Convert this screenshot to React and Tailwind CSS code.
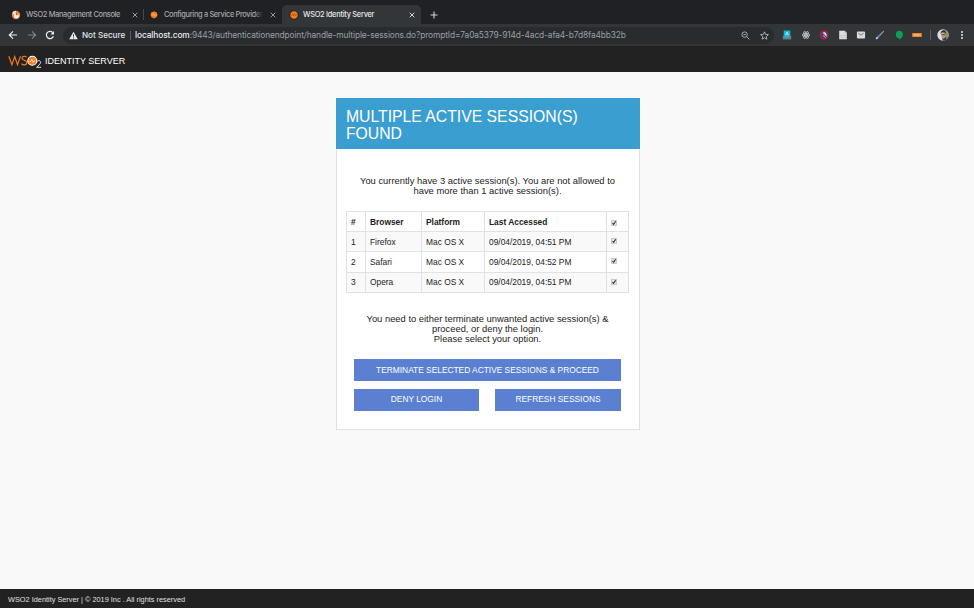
import React from "react";

const arial = "font-['Liberation_Sans',Arial,sans-serif]";

function Close({ className = "" }) {
  return (
    <svg viewBox="0 0 6 6" className={`h-[6px] w-[6px] shrink-0 ${className}`} stroke="currentColor" strokeWidth=".9">
      <path d="M.7.7l4.6 4.6M5.3.7L.7 5.3" />
    </svg>
  );
}

function Favicon({ kind }) {
  if (kind === "console")
    return (
      <svg viewBox="0 0 10 10" className="h-[10px] w-[10px] shrink-0">
        <circle cx="5" cy="5" r="4.2" fill="#f28a3c" />
        <path d="M5 .8A4.2 4.2 0 0 0 1 3.2L3.6 4.6 5 5z" fill="#f7e3d3" />
        <path d="M3.2 7.6V4.9L5 3.9l1 1.7 1.4-1.3.6 2.7-2 1.2z" fill="#fff" />
        <path d="M5 2.2l.8 3.3" stroke="#8a4a26" strokeWidth=".7" />
      </svg>
    );
  if (kind === "docs")
    return (
      <svg viewBox="0 0 10 10" className="h-[10px] w-[10px] shrink-0">
        <path d="M5 1.3L7.900 2.600 8.500 5 7.500 7.200 5 8.400 2.500 7.200 1.500 5 2.100 2.600z" fill="#f47b20" />
        <path d="M2.6 5h1.2l.8-1.5.9 2.4.7-.9h1.2" fill="none" stroke="#ffd0a6" strokeWidth=".6" />
      </svg>
    );
  return (
    <svg viewBox="0 0 10 10" className="h-[10px] w-[10px] shrink-0">
      <circle cx="5" cy="5" r="4.2" fill="#f47b20" stroke="#141414" strokeWidth=".8" />
      <path d="M2.300 5.800l1.200-2 1 2.200 1-2.400 1 2.200 1.200-1.500" fill="none" stroke="#a3521a" strokeWidth=".7" />
    </svg>
  );
}

function TabStrip() {
  return (
    <div className="flex h-[24px] items-end bg-[#202124] font-[Inter,sans-serif] text-[7.4px] font-medium tracking-[-0.33px] text-[#a5a8ac]">
      <div className="flex h-[19px] w-[143px] items-center pl-[11px] pr-[5px]">
        <Favicon kind="console" />
        <span className="ml-[5px] flex-1 whitespace-nowrap">WSO2 Management Console</span>
        <Close />
      </div>
      <div className="mb-[4px] h-[11px] w-px bg-[#46484b]" />
      <div className="flex h-[19px] w-[138px] items-center pl-[5px] pr-[6px]">
        <Favicon kind="docs" />
        <span className="relative ml-[5px] whitespace-nowrap">
          Configuring a Service Provider
          <span className="absolute inset-y-0 right-0 w-[9px] bg-gradient-to-r from-transparent to-[#202124]" />
        </span>
        <Close className="ml-auto" />
      </div>
      <div className="flex h-[19px] w-[139px] items-center rounded-t-[5px] bg-[#323639] pl-[7px] pr-[6px] tracking-[-0.26px] text-[#e6e7e8]">
        <Favicon kind="identity" />
        <span className="ml-[4px] flex-1 whitespace-nowrap">WSO2 Identity Server</span>
        <Close />
      </div>
      <svg viewBox="0 0 8 8" className="mb-[5px] ml-[9px] h-[8px] w-[8px]" stroke="#d0d2d4" strokeWidth="1.1">
        <path d="M4 .5v7M.5 4h7" />
      </svg>
    </div>
  );
}

function Extensions() {
  return (
    <div className="ml-[8px] flex items-center gap-[8.6px]">
      <svg viewBox="0 0 10 10" className="h-[10px] w-[10px]">
        <path d="M.8 5.8h8.4v3.6H.8z" fill="#77797b" />
        <path d="M1.7.6h6.6v6.2L5 8.2 1.7 6.8z" fill="#18b6d0" />
        <path d="M3.6 5.2L5 2l1.4 3.2M4.1 4.2h1.8" fill="none" stroke="#c9f3fa" strokeWidth=".7" />
      </svg>
      <svg viewBox="0 0 10 10" className="h-[10px] w-[10px]" fill="none" stroke="#bfc2c4" strokeWidth=".8">
        <ellipse cx="5" cy="5" rx="3.900" ry="1.6" />
        <ellipse cx="5" cy="5" rx="3.900" ry="1.6" transform="rotate(60 5 5)" />
        <ellipse cx="5" cy="5" rx="3.900" ry="1.6" transform="rotate(120 5 5)" />
        <circle cx="5" cy="5" r=".8" fill="#d8dadb" />
      </svg>
      <svg viewBox="0 0 10 10" className="h-[10px] w-[10px]">
        <circle cx="5" cy="5" r="3.6" fill="#2c4a78" />
        <path d="M3.600 2l2.600-.3 2 3.500-1 2.800-2.600-1z" fill="#6fb0f0" />
        <path d="M5 2.600l1.800 1.400-.5 1.300" stroke="#eef6fd" strokeWidth=".9" fill="none" />
        <circle cx="5" cy="5" r="3.9" fill="none" stroke="#cf1728" strokeWidth="1.2" />
        <path d="M2.2 2.3l5.6 5.4" stroke="#cf1728" strokeWidth="1" />
      </svg>
      <svg viewBox="0 0 10 10" className="h-[10px] w-[10px]">
        <path d="M1.2.8h5.6l2 2v6.5H1.2z" fill="#dedede" />
        <path d="M6.8.8v2h2M2.2 5.4h5.6M2.2 7.3h5.6" fill="none" stroke="#a9abad" strokeWidth=".5" />
      </svg>
      <svg viewBox="0 0 10 10" className="h-[10px] w-[10px]">
        <rect x=".9" y="1.5" width="8.2" height="7" rx="1" fill="#d9dadb" />
        <path d="M2.400 3.200L5 5.200l2.600-2" fill="none" stroke="#696c6f" strokeWidth=".9" />
      </svg>
      <svg viewBox="0 0 10 10" className="h-[10px] w-[10px]">
        <path d="M4.8 5.2L8.8 1.2" stroke="#a3a6aa" strokeWidth="1.1" />
        <path d="M1.8 8.300l3.3-3.4" stroke="#5a79d0" strokeWidth="2" />
        <path d="M1.1 9l1.6-1.6" stroke="#c6cce0" strokeWidth="1.6" />
      </svg>
      <svg viewBox="0 0 10 10" className="h-[10px] w-[10px]" fill="#0f9d58">
        <path d="M5 .7a3.9 3.9 0 0 1 3.9 3.9C8.9 7 7 8.800 5.300 9.700V8.400A3.900 3.900 0 0 1 5 .7z" />
      </svg>
      <svg viewBox="0 0 10 10" className="h-[10px] w-[10px]">
        <rect x=".2" y="3.100" width="9.600" height="3.800" rx=".5" fill="#ee8428" />
        <path d="M1.500 5h7" stroke="#ffe0bf" strokeWidth="1.100" strokeDasharray="1.300 .3" />
      </svg>
    </div>
  );
}

function Toolbar() {
  return (
    <div className="flex h-[22px] items-center bg-[#323639] font-[Inter,sans-serif] text-[8.15px]">
      <svg viewBox="0 0 10 10" className="ml-[8px] h-[10px] w-[10px]" fill="none" stroke="#eceded" strokeWidth="1.200">
        <path d="M9 5H1.400M5 1.300L1.300 5 5 8.700" />
      </svg>
      <svg viewBox="0 0 10 10" className="ml-[9px] h-[10px] w-[10px]" fill="none" stroke="#828588" strokeWidth="1.100">
        <path d="M1 5h7.600M5 1.300L8.700 5 5 8.700" />
      </svg>
      <svg viewBox="0 0 10 10" className="ml-[8px] h-[10px] w-[10px]" fill="none" stroke="#eceded" strokeWidth="1.200">
        <path d="M8.400 6.200A3.600 3.600 0 1 1 7.700 2.600" />
        <path d="M9 .9v3.500H5.500z" fill="#eceded" stroke="none" />
      </svg>
      <div className="ml-[8px] flex h-[17px] w-[711px] items-center rounded-full bg-[#282c2f] pl-[6px] pr-[5px]">
        <svg viewBox="0 0 10 10" className="h-[9px] w-[9px] shrink-0">
          <path d="M5 .8L9.800 9.300H.2z" fill="#e8eaed" />
          <path d="M5 3.600v2.700M5 7.200v1.100" stroke="#282c2f" strokeWidth="1" />
        </svg>
        <span className="ml-[4px] w-[44px] whitespace-nowrap text-[8.1px] font-medium text-[#e3e5e8]">Not Secure</span>
        <span className="ml-[4px] h-[9px] w-px bg-[#5b5e61]" />
        <span className="ml-[4px] flex-1 whitespace-nowrap text-[8.4px] tracking-[-0.126px] text-[#9b9fa3]">
          <span className="font-medium text-[#e8eaed]">localhost.com</span>
          :9443/authenticationendpoint/handle-multiple-sessions.do?promptId=7a0a5379-914d-4acd-afa4-b7d8fa4bb32b
        </span>
        <svg viewBox="0 0 10 10" className="h-[9px] w-[9px] shrink-0" fill="none" stroke="#b4b7ba" strokeWidth="1">
          <circle cx="4" cy="4" r="3" />
          <path d="M6.300 6.300l3 3M2.700 4h2.600" />
        </svg>
        <svg viewBox="0 0 10 10" className="ml-[10px] h-[9px] w-[9px] shrink-0" fill="none" stroke="#c4c7ca" strokeWidth=".9">
          <path d="M5 .9l1.250 2.900 3.100.25L7 6.100l.7 3.050L5 7.500 2.300 9.150 3 6.100.65 4.050l3.100-.25z" />
        </svg>
      </div>
      <Extensions />
      <span className="ml-[8px] h-[10px] w-px bg-[#5b5e61]" />
      <svg viewBox="0 0 12 12" className="ml-[6px] h-[12px] w-[12px]">
        <circle cx="6" cy="6" r="5.700" fill="#dcdedf" />
        <path d="M6 .5a5.600 5.600 0 0 1 4.700 8.500L7.500 10z" fill="#8b9463" />
        <path d="M4.100 4.500h4.500v3L7 9.700 4.700 8.500z" fill="#c4917a" />
        <path d="M3.600 5C3.400 2.200 5 1 6.700 1.200c1.700.2 2.700 1.400 2.100 4.100L8 3.500 5 3.400z" fill="#3b302b" />
        <path d="M4.500 5.600h3.800" stroke="#513b34" strokeWidth=".8" />
        <path d="M5 9l2 .8L8.500 8l1.500 2A5.500 5.500 0 0 1 6 11.700z" fill="#33363b" />
      </svg>
      <svg viewBox="0 0 4 10" className="ml-[11px] h-[10px] w-[4px]" fill="#e3e5e8">
        <circle cx="2" cy="1.900" r="1" />
        <circle cx="2" cy="5" r="1" />
        <circle cx="2" cy="8.100" r="1" />
      </svg>
    </div>
  );
}

function Logo() {
  return (
    <svg viewBox="0 0 34 20" className="h-[20px] w-[34px]" fill="none">
      <g stroke="#f47b20" strokeWidth="1.150">
        <path d="M.8 7.300L3.900 15.800 6.700 7.600 9.500 15.800 12.500 7.300" />
        <path d="M18.500 8.300C17.300 6.700 14 7 14 9.200c0 2.300 4.800 2 4.800 4.500 0 2.600-3.900 2.900-5.400.9" />
      </g>
      <circle cx="24.300" cy="11.800" r="4.500" fill="#f47b20" stroke="#fff" strokeWidth="1.1" />
      <path d="M21.600 12.400h1.200l1.200-2.300 1.200 3.300 1.100-1.600h.8" stroke="#fff" strokeWidth=".7" />
      <path d="M28.800 13.200c.3-2.200 3.800-2.100 3.800.2 0 1.700-2.600 3.200-4 4.900h4.500" stroke="#e5e5e5" strokeWidth="1" />
    </svg>
  );
}

function Check({ className = "" }) {
  return (
    <svg viewBox="0 0 6 6" className={`h-[6px] w-[6px] ${className}`}>
      <rect x=".3" y=".3" width="5.400" height="5.400" rx=".8" fill="#e4e4e4" stroke="#a5a5a5" strokeWidth=".6" />
      <path d="M1.500 3l1.100 1.300L4.700 1.300" fill="none" stroke="#303030" strokeWidth="1.1" />
    </svg>
  );
}

const sessions = [
  ["1", "Firefox", "Mac OS X", "09/04/2019, 04:51 PM"],
  ["2", "Safari", "Mac OS X", "09/04/2019, 04:52 PM"],
  ["3", "Opera", "Mac OS X", "09/04/2019, 04:51 PM"],
];

const cell = "border border-[#e1e1e1] p-0 pl-[4px] text-left align-middle";

function SessionTable() {
  return (
    <table className="w-[282px] table-fixed border-collapse text-[8.38px] leading-[10px] text-[#222]">
      <colgroup>
        <col className="w-[19px]" />
        <col className="w-[56px]" />
        <col className="w-[63px]" />
        <col className="w-[122px]" />
        <col className="w-[22px]" />
      </colgroup>
      <thead>
        <tr className="h-[20px]">
          {["#", "Browser", "Platform", "Last Accessed"].map((h) => (
            <th key={h} className={`${cell} font-bold`}>{h}</th>
          ))}
          <th className={cell}><Check className="mt-[2px]" /></th>
        </tr>
      </thead>
      <tbody>
        {sessions.map((row, i) => (
          <tr key={row[0]} className={`${i === 0 ? "h-[20px]" : "h-[20.5px]"} ${i % 2 ? "bg-white" : "bg-[#f9f9f9]"}`}>
            {row.map((v, j) => (
              <td key={j} className={cell}>{v}</td>
            ))}
            <td className={cell}><Check className="mb-[1.500px]" /></td>
          </tr>
        ))}
      </tbody>
    </table>
  );
}

function Button({ children, className = "" }) {
  return (
    <button className={`flex h-[22px] items-center justify-center whitespace-nowrap bg-[#5b80d2] text-[8.37px] leading-none text-white ${className}`}>
      {children}
    </button>
  );
}

export default function App() {
  return (
    <div className={`flex h-[608px] w-[974px] flex-col overflow-hidden bg-[#f9f9f9] ${arial}`}>
      <TabStrip />
      <Toolbar />
      <header className="flex h-[26px] items-center bg-[#222] pl-[8px] text-white">
        <Logo />
        <span className="ml-[3px] mt-[3px] whitespace-nowrap text-[9px] leading-[10px]">IDENTITY SERVER</span>
      </header>
      <main className="flex flex-1 flex-col items-center pt-[26px]">
        <section className="ml-px flex h-[332px] w-[304px] flex-col border border-[#e1e1e1] bg-white">
          <h1 className="-mx-px -mt-px h-[51px] bg-[#3a9ed1] pl-[10.500px] pt-[10px] text-[15.75px] leading-[17px] text-white">
            MULTIPLE ACTIVE SESSION(S)
            <br />
            FOUND
          </h1>
          <p className="mt-[27px] whitespace-nowrap text-center text-[9.38px] leading-[10px] text-[#222]">
            You currently have 3 active session(s). You are not allowed to
            <br />
            have more than 1 active session(s).
          </p>
          <div className="ml-[9.500px] mt-[15px] h-[82px]">
            <SessionTable />
          </div>
          <p className="mt-[21px] whitespace-nowrap text-center text-[9.38px] leading-[10px] text-[#222]">
            You need to either terminate unwanted active session(s) &amp;
            <br />
            proceed, or deny the login.
            <br />
            Please select your option.
          </p>
          <div className="mx-[17.500px] mt-[15px]">
            <Button className="w-full">TERMINATE SELECTED ACTIVE SESSIONS &amp; PROCEED</Button>
            <div className="mt-[7.500px] flex justify-between">
              <Button className="w-[125px]">DENY LOGIN</Button>
              <Button className="w-[126px]">REFRESH SESSIONS</Button>
            </div>
          </div>
        </section>
      </main>
      <footer className="flex h-[19px] items-center bg-[#222] pl-[8px] pt-[2px] text-[7.35px] text-[#e0e0e0]">
        WSO2 Identity Server | © 2019 Inc . All rights reserved
      </footer>
    </div>
  );
}
